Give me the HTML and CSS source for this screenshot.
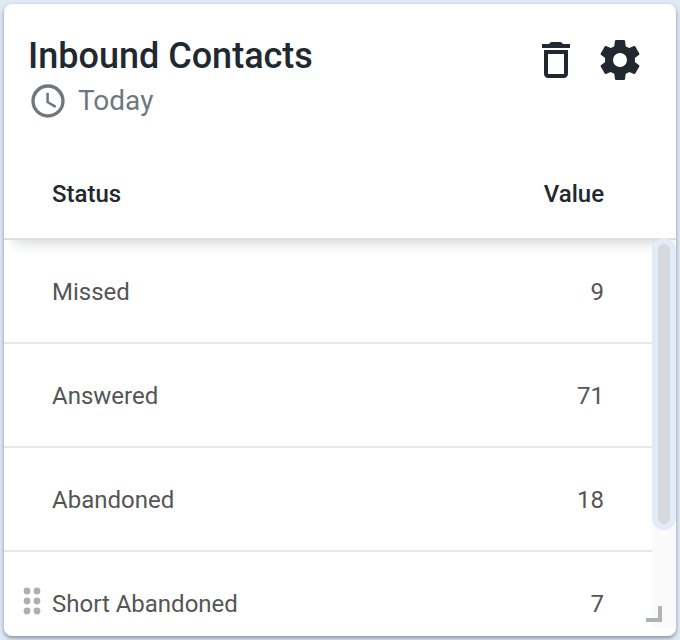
FILE: index.html
```html
<!DOCTYPE html>
<html lang="en">
<head>
<meta charset="utf-8">
<meta name="viewport" content="width=device-width, initial-scale=1">
<title>Inbound Contacts</title>
<link rel="stylesheet" href="styles.css">
</head>
<body>
<section class="card">
  <header class="card-header">
    <div class="heading">
      <h1 class="title">Inbound Contacts</h1>
      <p class="period">
        <svg class="period-icon" viewBox="0 0 24 24" aria-hidden="true"><path d="M11.99 2C6.47 2 2 6.48 2 12s4.47 10 9.99 10C17.52 22 22 17.52 22 12S17.52 2 11.99 2zM12 20c-4.42 0-8-3.58-8-8s3.58-8 8-8 8 3.58 8 8-3.58 8-8 8zm.5-13H11v6l5.25 3.15.75-1.23-4.5-2.67z"/></svg>
        <span>Today</span>
      </p>
    </div>
    <div class="actions">
      <button class="icon-button" type="button" aria-label="Delete">
        <svg viewBox="0 0 24 24" aria-hidden="true"><path d="M6 19c0 1.100.9 2 2 2h8c1.100 0 2-.9 2-2V7H6v12zM8 9h8v10H8V9zM15.500 4c-.6-.8-1-1-1.600-1h-3.800c-.6 0-1 .2-1.600 1H5v2h14V4z"/></svg>
      </button>
      <button class="icon-button" type="button" aria-label="Settings">
        <svg viewBox="0 0 24 24" aria-hidden="true"><path d="M12 15.5A3.5 3.5 0 0 1 8.500 12 3.500 3.500 0 0 1 12 8.500a3.500 3.500 0 0 1 3.500 3.500 3.500 3.500 0 0 1-3.500 3.500m7.430-2.530c.04-.32.07-.64.07-.97 0-.33-.03-.66-.07-1l2.110-1.630c.19-.15.24-.42.12-.64l-2-3.460c-.12-.22-.39-.31-.61-.22l-2.490 1c-.52-.39-1.060-.73-1.690-.98l-.37-2.650A.506.506 0 0 0 14 2h-4c-.25 0-.46.18-.5.42l-.37 2.650c-.63.25-1.170.59-1.690.98l-2.490-1c-.22-.09-.49 0-.61.22l-2 3.460c-.13.22-.07.49.12.64L4.570 11c-.04.34-.07.67-.07 1 0 .33.03.65.07.97l-2.110 1.660c-.19.15-.25.42-.12.64l2 3.460c.12.22.39.3.61.22l2.490-1.010c.52.4 1.060.74 1.690.99l.37 2.650c.04.24.25.42.5.42h4c.25 0 .46-.18.5-.42l.37-2.650c.63-.26 1.170-.59 1.690-.99l2.490 1.010c.22.08.49 0 .61-.22l2-3.460c.12-.22.07-.49-.12-.64l-2.110-1.660z"/></svg>
      </button>
    </div>
  </header>
  <div class="table-area">
    <table class="contacts">
      <thead>
        <tr><th scope="col">Status</th><th scope="col" class="value">Value</th></tr>
      </thead>
      <tbody>
        <tr><td>Missed</td><td class="value">9</td></tr>
        <tr><td>Answered</td><td class="value">71</td></tr>
        <tr><td>Abandoned</td><td class="value">18</td></tr>
        <tr><td>Short Abandoned</td><td class="value">7</td></tr>
      </tbody>
    </table>
    <div class="track"></div>
    <div class="thumb"></div>
  </div>
  <svg class="drag-handle" viewBox="0 0 18 28" aria-hidden="true">
    <circle cx="4" cy="4" r="3.4"/><circle cx="14" cy="4" r="3.4"/>
    <circle cx="4" cy="14" r="3.4"/><circle cx="14" cy="14" r="3.4"/>
    <circle cx="4" cy="24" r="3.4"/><circle cx="14" cy="24" r="3.4"/>
  </svg>
  <div class="resize-handle"></div>
</section>
</body>
</html>
```
FILE: styles.css
```css
* {
  box-sizing: border-box;
}

body {
  margin: 0;
  padding: 4px;
  background: #e2e9f6;
  color: #212830;
  font-family: Roboto, "Liberation Sans", sans-serif;
}

.card {
  position: relative;
  display: flex;
  flex-direction: column;
  height: calc(100vh - 8px);
  padding-bottom: 8px;
  border-radius: 8px;
  background: #fff;
  box-shadow: 0 2px 4px rgba(40, 50, 70, 0.5);
}

.card-header {
  display: flex;
  justify-content: space-between;
  padding: 28px 32px 26px 24px;
}

.title {
  margin: 0;
  font-size: 36px;
  font-weight: 500;
  line-height: 48px;
}

.period {
  display: flex;
  align-items: center;
  gap: 10px;
  margin: 0;
  color: #6f777e;
  font-size: 28px;
  line-height: 42px;
}

.period-icon {
  width: 40px;
  height: 40px;
  fill: currentColor;
}

.actions {
  display: flex;
  gap: 16px;
  padding-top: 4px;
}

.icon-button {
  width: 48px;
  height: 48px;
  padding: 0;
  border: 0;
  background: none;
  color: inherit;
  cursor: pointer;
}

.icon-button svg {
  display: block;
  width: 48px;
  height: 48px;
  fill: currentColor;
}

.table-area {
  position: relative;
  flex: 1;
  min-height: 0;
  overflow: hidden;
}

.contacts {
  width: 100%;
  border-spacing: 0;
  font-size: 24px;
  line-height: 32px;
}

.contacts thead {
  position: relative;
  z-index: 1;
  box-shadow: 0 12px 12px -10px rgba(33, 40, 60, 0.22);
}

.contacts th {
  height: 92px;
  padding: 2px 48px 0;
  border-bottom: 2px solid #dddfe1;
  background: #fff;
  font-weight: 500;
  text-align: left;
}

.contacts td {
  height: 104px;
  padding: 2px 48px 0;
  border-bottom: 2px solid #e5e7e8;
  color: #555;
}

.contacts .value {
  padding-right: 72px;
  text-align: right;
}

.track {
  position: absolute;
  top: 92px;
  right: 0;
  bottom: 0;
  width: 24px;
  background: #fafafa;
}

.thumb {
  position: absolute;
  z-index: 2;
  top: 90px;
  right: 0;
  width: 24px;
  height: 292px;
  border: 6px solid #e4ebf8;
  border-radius: 12px;
  background: #d5d9dc;
}

.drag-handle {
  position: absolute;
  left: 19px;
  bottom: 21px;
  width: 18px;
  height: 28px;
  fill: #abb0b4;
}

.resize-handle {
  position: absolute;
  right: 14px;
  bottom: 14px;
  width: 16px;
  height: 16px;
  border: solid #afb3b7;
  border-width: 0 4px 4px 0;
}
```
